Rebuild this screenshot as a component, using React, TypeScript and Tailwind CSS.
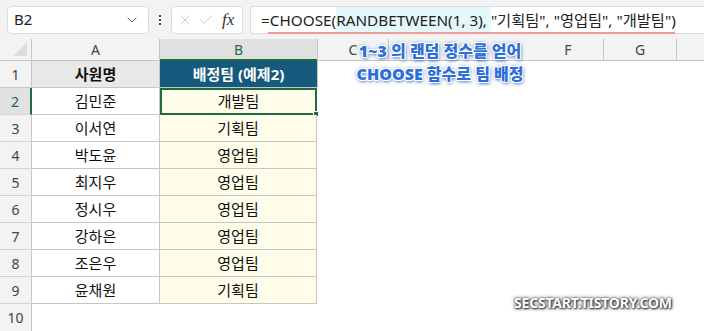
import React from 'react'
import { ChevronDown, X, Check } from 'lucide-react'

// 시트 데이터
const rows = [
  { name: '김민준', team: '개발팀' },
  { name: '이서연', team: '기획팀' },
  { name: '박도윤', team: '영업팀' },
  { name: '최지우', team: '영업팀' },
  { name: '정시우', team: '영업팀' },
  { name: '강하은', team: '영업팀' },
  { name: '조은우', team: '영업팀' },
  { name: '윤채원', team: '기획팀' }
]

// D, E 머리글은 주석에 가려져 있음
const extraCols = ['C', '', '', 'F', 'G', '']

const font = "font-['Noto_Sans','Noto_Sans_CJK_KR',sans-serif]"

const FormulaBar: React.FC = () => (
  <div className="relative flex h-[39px] items-center bg-[#f3f3f3] pl-[7px]">
    {/* 이름 상자 */}
    <div className="flex h-[28px] w-[142px] items-center justify-between rounded-[4px] border border-[#dcdcdc] bg-white pl-[6px] pr-[8px]">
      <span className="text-[15px] text-[#222]">B2</span>
      <ChevronDown className="h-4 w-4 text-[#555]" strokeWidth={1.5} />
    </div>
    <div className="flex w-[22px] flex-col items-center gap-[2px]">
      <span className="h-[2px] w-[2px] bg-[#444]" />
      <span className="h-[2px] w-[2px] bg-[#444]" />
      <span className="h-[2px] w-[2px] bg-[#444]" />
    </div>
    <div className="flex h-[28px] w-[72px] items-center gap-[5px] rounded-[4px] border border-[#dcdcdc] bg-white pl-[5px]">
      <X className="h-[16px] w-[16px] text-[#c4c4c4]" strokeWidth={1.3} />
      <Check className="h-[16px] w-[16px] text-[#c4c4c4]" strokeWidth={1.3} />
      <span className="ml-[3px] font-['Liberation_Serif',serif] text-[17px] italic text-[#333]">fx</span>
    </div>
    {/* 수식 입력줄 */}
    <div className="ml-[7px] h-[28px] flex-1 overflow-hidden rounded-l-[4px] border border-r-0 border-[#dcdcdc] bg-white pl-[10px] text-[15.3px] leading-[26px] whitespace-pre text-[#222]">
      =CHOOSE(<span className="bg-[#e4f8fa] py-[4px]">RANDBETWEEN(1, 3), </span>"기획팀", "영업팀", "개발팀")
    </div>
    <div className="absolute top-[32px] left-[268px] h-[2px] w-[407px] bg-[#f29a9a]" />
  </div>
)

const App: React.FC = () => {
  return (
    <div className={`relative h-[331px] w-[704px] overflow-hidden bg-white ${font}`}>
      <FormulaBar />

      {/* 시트 */}
      <div className="grid grid-cols-[32px_128px_157px_72px_72px_72px_71px_73px_72px] grid-rows-[22px_repeat(10,27px)]">
        {/* 열 머리글 */}
        <div className="relative border-r border-b border-[#c6c6c6] bg-[#f3f3f3]">
          <svg className="absolute right-[4px] bottom-[4px]" width="14" height="14" viewBox="0 0 14 14">
            <polygon points="14,0 14,14 0,14" fill="#dcdcdc" />
          </svg>
        </div>
        <div className="flex items-center justify-center border-r border-b border-[#c6c6c6] bg-[#f3f3f3] text-[14px] text-[#444]">A</div>
        <div className="flex items-center justify-center border-b-2 border-b-[#1e6b41] bg-[#e1e1e1] text-[14px] text-[#1e6b41]">B</div>
        {extraCols.map((c, i) => (
          <div
            key={i}
            className={`flex items-center justify-center border-b border-[#c6c6c6] bg-[#f3f3f3] text-[14px] text-[#444] ${i === 0 || i >= 3 ? 'border-r' : ''} ${i === 0 ? 'border-l' : ''}`}
          >
            {c}
          </div>
        ))}

        {/* 1행: 머리글 */}
        <div className="flex items-center justify-center border-r border-b border-[#c6c6c6] bg-[#f3f3f3] text-[14px] text-[#444]">1</div>
        <div className="flex items-center justify-center border-r border-b border-[#c6c6c6] bg-[#e8e8e8] text-[15px] font-bold text-[#111]">사원명</div>
        <div className="flex items-center justify-center border-b border-[#c6c6c6] bg-[#155a7d] text-[15px] font-bold text-white">배정팀 (예제2)</div>
        <div className="col-span-6 border-l border-[#c6c6c6]" />

        {rows.map((r, i) => (
          <React.Fragment key={r.name}>
            <div
              className={`flex items-center justify-center border-b border-[#d4d4d4] text-[14px] ${
                i === 0 ? 'border-r-2 border-r-[#1e6b41] bg-[#e1e1e1] text-[#1e6b41]' : 'border-r border-r-[#c6c6c6] bg-[#f3f3f3] text-[#444]'
              }`}
            >
              {i + 2}
            </div>
            <div className="flex items-center justify-center border-r border-b border-[#c6c6c6] text-[15px] text-[#111]">{r.name}</div>
            <div
              className={`relative flex items-center justify-center bg-[#fefde9] text-[15px] text-[#111] ${
                i === 0 ? 'border-2 border-[#1e6b41]' : 'border-r border-b border-[#c6c6c6]'
              }`}
            >
              {r.team}
              {i === 0 && <div className="absolute -right-[4px] -bottom-[4px] h-[6px] w-[6px] border border-white bg-[#1e6b41]" />}
            </div>
            <div className="col-span-6" />
          </React.Fragment>
        ))}

        <div className="flex items-center justify-center border-r border-[#c6c6c6] bg-[#f3f3f3] text-[14px] text-[#444]">10</div>
        <div className="col-span-8" />
      </div>

      {/* 설명 주석 */}
      <div className="absolute top-[40px] left-[330px] w-[220px] text-center text-[16px] leading-[23px] font-black text-[#2c6fd8] [text-shadow:1px_0_0_#fff,-1px_0_0_#fff,0_1px_0_#fff,0_-1px_0_#fff,1px_1px_0_#fff,-1px_-1px_0_#fff,1px_-1px_0_#fff,-1px_1px_0_#fff,0_0_4px_#3a6cc8,1px_2px_3px_rgba(20,60,150,0.6)]">
        <div>1~3 의 랜덤 정수를 얻어</div>
        <div>CHOOSE 함수로 팀 배정</div>
      </div>

      {/* 워터마크 */}
      <div className="absolute top-[292px] left-[514px] text-[14px] font-bold tracking-[-0.2px] text-white [text-shadow:0_0_2px_#333,1px_1px_2px_#333,0_0_4px_#666]">
        SECSTART.TISTORY.COM
      </div>
    </div>
  )
}

export default App
